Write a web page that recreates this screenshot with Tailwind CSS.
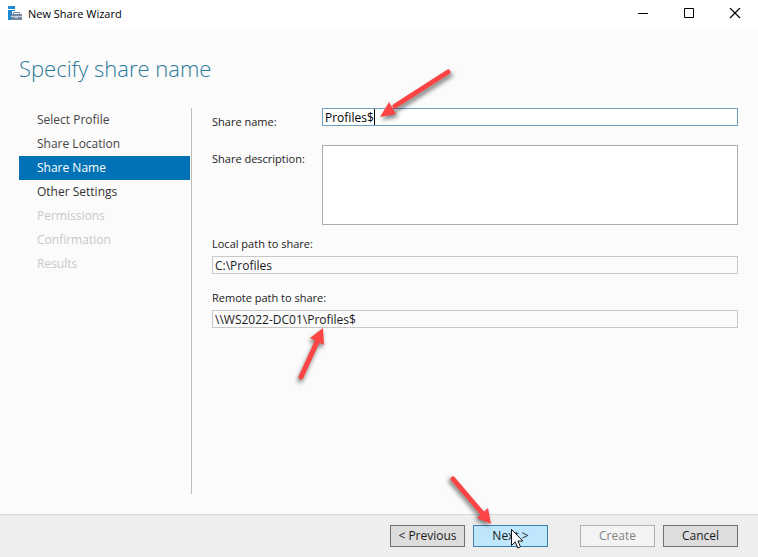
<!DOCTYPE html>
<html lang="en">
<head>
<meta charset="utf-8">
<meta name="viewport" content="width=device-width, initial-scale=1">
<title>New Share Wizard</title>
<script src="https://cdn.jsdelivr.net/npm/@tailwindcss/browser@4"></script>
</head>
<body class="flex min-h-screen flex-col bg-[#fbfbfb] font-['Segoe_UI','Open_Sans',sans-serif] text-xs text-[#1a1a1a]">

<header class="flex h-7 items-center bg-white pl-2">
  <svg class="size-4 shrink-0" viewBox="0 0 16 16" aria-hidden="true">
    <path d="M0 0h7v3H0zM0 4h7v1H4v3H3v6H0z" fill="#1f8ad0"/>
    <path d="M3 8h11v6H3z" fill="#7488a0"/>
    <path d="M5.500 8V6.500h6V8" fill="none" stroke="#7488a0"/>
    <path d="M3 10.500h4M10 10.500h4" stroke="#c9d3de"/>
    <path d="M7 10h3v2H7z" fill="#c9d3de"/>
  </svg>
  <span class="ml-1 grow text-[11px] text-black">New Share Wizard</span>
  <button type="button" aria-label="Minimize" class="flex h-7 w-[46px] items-center justify-center">
    <svg class="size-3" viewBox="0 0 12 12" fill="none" stroke="#000"><path d="M1 5.500h10"/></svg>
  </button>
  <button type="button" aria-label="Maximize" class="flex h-7 w-[46px] items-center justify-center">
    <svg class="size-3" viewBox="0 0 12 12" fill="none" stroke="#000"><path d="M1.500.5h9v9h-9z"/></svg>
  </button>
  <button type="button" aria-label="Close" class="flex h-7 w-[46px] items-center justify-center">
    <svg class="size-3" viewBox="0 0 12 12" fill="none" stroke="#000" stroke-width="1.200"><path d="M1 0l10 10M11 0L1 10"/></svg>
  </button>
</header>

<main class="flex grow flex-col pb-5 pl-[19px] pr-5 pt-6">
  <h1 class="text-[22px] leading-8 font-light text-[#2b7a99]">Specify share name</h1>

  <div class="mt-6 flex grow">
    <nav aria-label="Wizard steps" class="w-[173px] shrink-0 border-r border-[#bdbdbd] pr-px leading-6">
      <ol>
        <li><a href="#profile" class="block pl-[18px] text-[#444]">Select Profile</a></li>
        <li><a href="#location" class="block pl-[18px] text-[#444]">Share Location</a></li>
        <li><a href="#name" aria-current="step" class="block bg-[#0072b5] pl-[18px] text-white">Share Name</a></li>
        <li><a href="#settings" class="block pl-[18px] text-[#333]">Other Settings</a></li>
        <li class="pl-[18px] text-[#c8c8c8]">Permissions</li>
        <li class="pl-[18px] text-[#c8c8c8]">Confirmation</li>
        <li class="pl-[18px] text-[#c8c8c8]">Results</li>
      </ol>
    </nav>

    <form id="share" class="min-w-0 grow pl-5">
      <div class="flex">
        <label for="share-name" class="w-[110px] shrink-0 pt-[5px] text-[11px] leading-[18px]">Share name:</label>
        <div class="relative h-[18px] grow">
          <input id="share-name" type="text" value="Profiles$" class="block h-[18px] w-full border border-[#6f9fc0] bg-white px-0.5 text-black outline-none">
          <span class="absolute left-[52px] top-px h-4 w-px bg-black"></span>
          <svg class="pointer-events-none absolute left-0 top-0 size-px overflow-visible drop-shadow-[2px_3px_2px_rgba(0,0,0,0.5)]" fill="#fc4444" aria-hidden="true">
            <path d="M126-36L73-2" stroke="#fc4444" stroke-width="5" stroke-linecap="round"/><path d="M58 9L67-6L74 6z"/>
          </svg>
        </div>
      </div>

      <div class="mt-3.5 flex">
        <label for="share-description" class="w-[110px] shrink-0 pt-[5px] text-[11px] leading-[18px]">Share description:</label>
        <textarea id="share-description" class="block h-20 min-w-0 grow resize-none border border-[#acacac] bg-white px-0.5 outline-none"></textarea>
      </div>

      <label for="local-path" class="mt-2.5 block text-[11px] leading-[18px]">Local path to share:</label>
      <input id="local-path" type="text" readonly value="C:\Profiles" class="mt-[3px] block h-[18px] w-full border border-[#c8c8c8] px-0.5 outline-none">

      <label for="remote-path" class="mt-[15px] block text-[11px] leading-[18px]">Remote path to share:</label>
      <div class="relative mt-[3px]">
        <input id="remote-path" type="text" readonly value="\\WS2022-DC01\Profiles$" class="block h-[18px] w-full border border-[#c8c8c8] px-0.5 outline-none">
        <svg class="pointer-events-none absolute left-0 top-0 size-px overflow-visible drop-shadow-[-1px_3px_2px_rgba(0,0,0,0.5)]" fill="#fc4444" aria-hidden="true">
          <path d="M89 67L105 32" stroke="#fc4444" stroke-width="5" stroke-linecap="round"/><path d="M111 18L98 28L112 35z"/>
        </svg>
      </div>
    </form>
  </div>
</main>

<footer class="flex h-[43px] items-start justify-end gap-2 border-t border-[#d9d9d9] bg-[#eeeeee] px-5 pt-2.5">
  <button type="button" class="h-[22px] w-[75px] border border-[#707070] bg-[#dddddd]">&lt; Previous</button>
  <div class="relative">
    <button type="submit" form="share" class="block h-[22px] w-[75px] border border-[#3c7fb1] bg-[#bee6fd]">Next &gt;</button>
    <svg class="pointer-events-none absolute left-0 top-0 size-px overflow-visible drop-shadow-[-2px_2px_2px_rgba(0,0,0,0.5)]" fill="#fc4444" aria-hidden="true">
      <path d="M-20-46L9-12" stroke="#fc4444" stroke-width="5" stroke-linecap="round"/><path d="M18-1L4-7L15-17z"/>
    </svg>
    <svg class="pointer-events-none absolute left-[38px] top-1 h-5 w-3 overflow-visible" viewBox="0 0 12 20" aria-hidden="true">
      <path d="M.5.5v16l3.700-3.600 2.600 6.100 2.700-1.200-2.600-5.800h5z" fill="#fff" stroke="#111"/>
    </svg>
  </div>
  <button type="button" disabled class="ml-6 h-[22px] w-[75px] border border-[#adb2b5] bg-[#f4f4f4] text-[#838383]">Create</button>
  <button type="button" class="h-[22px] w-[75px] border border-[#707070] bg-[#dddddd]">Cancel</button>
</footer>
</body>
</html>
